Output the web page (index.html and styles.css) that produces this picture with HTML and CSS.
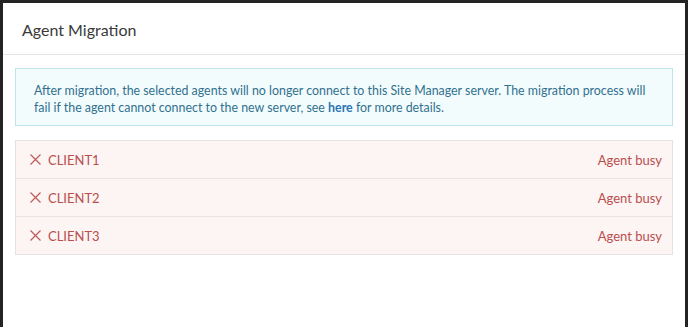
FILE: index.html
```html
<!DOCTYPE html>
<html lang="en">
<head>
  <meta charset="UTF-8" />
  <title>Agent Migration</title>
  <link rel="stylesheet" href="styles.css">
</head>
<body>
  <div class="modal">
    <div class="modal-header">
      <h4>Agent Migration</h4>
    </div>
    <div class="modal-body">
      <div class="alert">
        After migration, the selected agents will no longer connect to this Site Manager server. The migration process will
        fail if the agent cannot connect to the new server, see <a href="#">here</a> for more details.
      </div>

      <ul class="agents">
        <li>
          <span class="name"><svg class="ico" viewBox="0 0 11 11"><path d="M0.5 0.5L10.5 10.5M10.5 0.5L0.5 10.5"/></svg>CLIENT1</span>
          <span class="status">Agent busy</span>
        </li>
        <li>
          <span class="name"><svg class="ico" viewBox="0 0 11 11"><path d="M0.5 0.5L10.5 10.5M10.5 0.5L0.5 10.5"/></svg>CLIENT2</span>
          <span class="status">Agent busy</span>
        </li>
        <li>
          <span class="name"><svg class="ico" viewBox="0 0 11 11"><path d="M0.5 0.5L10.5 10.5M10.5 0.5L0.5 10.5"/></svg>CLIENT3</span>
          <span class="status">Agent busy</span>
        </li>
      </ul>
    </div>
  </div>
</body>
</html>
```

FILE: styles.css
```css
* {
  margin: 0;
  padding: 0;
  box-sizing: border-box;
}

body {
  font-family: 'Lato', sans-serif;
  background-color: #232323;
  height: 327px;
  overflow: hidden;
  padding: 3px 3px 0 3px;
}

.modal {
  background-color: #fff;
  height: 340px;
}

.modal-header {
  height: 52px;
  padding: 0 19px;
  display: flex;
  align-items: center;
  border-bottom: 1px solid #e5e5e5;
}

.modal-header h4 {
  font-size: 16px;
  font-weight: 400;
  color: #3a3a3a;
  padding-top: 2px;
}

.modal-body {
  padding: 13px 12px;
}

.alert {
  height: 58px;
  background-color: #f3fcfd;
  border: 1px solid #bfe4ec;
  color: #31708f;
  font-size: 12.4px;
  line-height: 16.5px;
  padding: 14px 18px 0;
}

.alert a {
  color: #2a75b5;
  font-weight: 700;
  text-decoration: none;
}

.agents {
  list-style: none;
  margin-top: 14px;
  border: 1px solid #e7e2e2;
}

.agents li {
  display: flex;
  justify-content: space-between;
  align-items: center;
  height: 38px;
  padding: 0 10px 0 14px;
  background-color: #fdf4f4;
  color: #b94f4d;
  font-size: 13px;
  border-top: 1px solid #e9e3e3;
}

.agents li:first-child {
  border-top: none;
  height: 37px;
}

.name {
  display: flex;
  align-items: center;
}

.ico {
  width: 11px;
  height: 11px;
  margin-right: 7px;
  stroke: #c05a58;
  stroke-width: 1.2;
  fill: none;
}
```
